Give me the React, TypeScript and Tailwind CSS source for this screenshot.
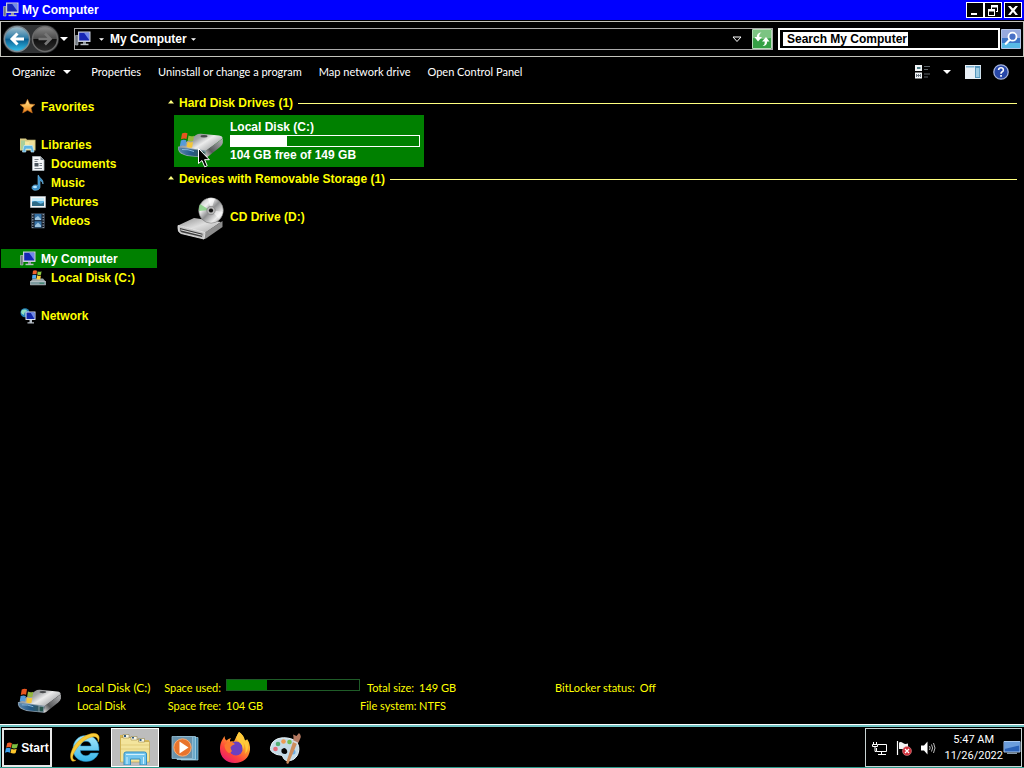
import React from "react";

type IconProps = { className?: string };

function ComputerIcon({ className = "size-4" }: IconProps) {
  return (
    <svg viewBox="0 0 16 16" className={className} aria-hidden="true">
      <path d="M.5 4.500h2.500v9.500h-2.500z" fill="#70787f" stroke="#c3c8cc" strokeWidth=".6" />
      <path d="M3 .5h12.500v10.500H3z" fill="#c9cedb" />
      <path d="M4.200 1.700h10v7.800h-10z" fill="#1626b4" />
      <path d="M9 1.700h5.200v7.300z" fill="#7089ea" />
      <path d="M8 11h3v2H8z" fill="#8f969e" />
      <path d="M5.500 12.700h8v1.500h-8z" fill="#bcc1c7" />
    </svg>
  );
}

function WinFlag({ className = "size-4" }: IconProps) {
  return (
    <svg viewBox="0 0 16 16" className={className} aria-hidden="true">
      <path d="M2.500 2.500C4.500 1.300 6 1.500 7.900 2.600L6.800 7.600C5 6.600 3.400 6.600 1.300 7.600Z" fill="#ee5a24" />
      <path d="M8.600 3C10.600 4.200 12.500 4 15 2.800L13.700 7.800C11.500 8.900 9.500 8.800 7.500 7.800Z" fill="#7fc241" />
      <path d="M1.100 8.400C3 7.500 4.700 7.500 6.600 8.500L5.500 13.300C3.700 12.300 2 12.400 0 13.400Z" fill="#3aa0ec" />
      <path d="M7.300 8.800C9.300 9.900 11.200 9.800 13.400 8.800L12.100 13.700C10 14.700 8.200 14.500 6.200 13.500Z" fill="#fcc62c" />
    </svg>
  );
}

function DriveIcon({ className = "h-8 w-12" }: IconProps) {
  return (
    <svg viewBox="0 0 48 32" className={className} aria-hidden="true">
      <defs>
        <linearGradient id="driveTop" x1="0" x2="1" y1="0" y2=".6">
          <stop offset="0" stopColor="#77797b" />
          <stop offset=".45" stopColor="#a4a6a8" />
          <stop offset=".65" stopColor="#ececec" />
          <stop offset="1" stopColor="#a0a2a4" />
        </linearGradient>
        <linearGradient id="driveSide" x1="0" x2="1" y1="1" y2="0">
          <stop offset="0" stopColor="#e6e6e6" />
          <stop offset=".35" stopColor="#58595b" />
          <stop offset="1" stopColor="#b5b6b8" />
        </linearGradient>
        <linearGradient id="driveFront" x1="0" x2="1" y1="0" y2="0">
          <stop offset="0" stopColor="#5c87ae" />
          <stop offset=".6" stopColor="#23598a" />
          <stop offset="1" stopColor="#345a62" />
        </linearGradient>
      </defs>
      <path d="M2 18.500L20 6Q22 4.600 25 4.800L43 6.500Q47 7 46.500 9.500L30 22Z" fill="url(#driveTop)" />
      <path d="M30 21.500L46.800 9.500V14Q46.500 16 44 18L31.500 28Q30 29 28.500 28.700Z" fill="url(#driveSide)" />
      <path d="M2 17.500L30 21.500L29 28.800L11 27Q3 25 2 20.500Z" fill="#8a9dac" />
      <path d="M2.800 18.500L23.500 21.500V27.500L12 26.200Q4.500 24.500 2.800 20.500Z" fill="url(#driveFront)" />
      <path d="M24.500 22.200L28.700 22.800L28 27.500L24.500 27.200Z" fill="#27554d" />
      <path d="M6 20.500Q12 20 18 22.500" fill="none" stroke="#8fc0e4" strokeWidth=".9" />
      <ellipse cx="28" cy="7.200" rx="3.500" ry="1.200" fill="#494b4d" />
      <path d="M6 4.500Q9 3 11.500 4.300L10.500 10Q8 9 5 10.300Z" fill="#e8561f" />
      <path d="M12.500 6.500Q15 8 18 6.800L17.200 12Q14.500 13 11.700 11.600Z" fill="#94b83f" />
      <path d="M4.800 11.400Q7.700 10.200 10.300 11.300L9.400 17Q6.700 15.900 3.800 17.200Z" fill="#559bdb" />
      <path d="M11.500 12.700Q14.300 14 17 13L16.200 18.400Q13.500 19.300 10.700 18Z" fill="#f4c63b" />
    </svg>
  );
}

function CdDriveIcon({ className = "h-11 w-12" }: IconProps) {
  return (
    <svg viewBox="0 0 48 44" className={className} aria-hidden="true">
      <defs>
        <linearGradient id="discShine" x1="0" x2="1" y1="0" y2="1">
          <stop offset="0" stopColor="#a9aba9" />
          <stop offset=".3" stopColor="#f0f0f0" />
          <stop offset=".5" stopColor="#8f9091" />
          <stop offset=".75" stopColor="#ebebeb" />
          <stop offset="1" stopColor="#999" />
        </linearGradient>
        <linearGradient id="cdBody" x1="0" x2="1" y1="0" y2="1">
          <stop offset="0" stopColor="#8b8b8b" />
          <stop offset=".5" stopColor="#dedede" />
          <stop offset="1" stopColor="#a4a4a4" />
        </linearGradient>
      </defs>
      <path d="M2 28.500L18 21L45 25L29 36Z" fill="url(#cdBody)" />
      <path d="M29 35.500L46.500 24V30L30 41.500Q28 42.500 26.500 42Z" fill="#8c8c8c" />
      <path d="M2 28.500L29 35.500L28 42L5 36.500Q1.600 35 2 31Z" fill="#c4c4c4" stroke="#eaeaea" strokeWidth=".8" />
      <path d="M4 31L26.500 36.700L26 40L5.500 35.200Q4 34.300 4 33Z" fill="#3b3b3b" />
      <path d="M4.500 32.800L26 38.200" stroke="#dadada" strokeWidth="1" />
      <ellipse cx="35" cy="13.500" rx="12.300" ry="12.700" fill="url(#discShine)" stroke="#777" strokeWidth=".6" />
      <path d="M33.500 13L24 7Q22.500 10 23 14Z" fill="#7fce7c" opacity=".8" />
      <path d="M35 13L32 1.200Q36 .5 39 1.500Z" fill="#fff" opacity=".7" />
      <path d="M35 13L47 15Q46 19 43 22Z" fill="#fff" opacity=".5" />
      <circle cx="35" cy="13.500" r="4.200" fill="#b5b5b5" stroke="#777" strokeWidth=".6" />
      <circle cx="35" cy="13.500" r="2.100" fill="#111" />
    </svg>
  );
}

function SmallDriveIcon() {
  return (
    <svg viewBox="0 0 16 16" className="size-4" aria-hidden="true">
      <path d="M3 8.500L13 8.500L16 12H0Z" fill="#9aa6aa" />
      <path d="M.3 11.500h15.400v3.300H.3z" fill="#7d9a9f" stroke="#c3ccd0" strokeWidth=".7" />
      <path d="M9.500 12.700h4.500v1H9.500z" fill="#2c7f62" />
      <path d="M3 .8Q5-.2 7 .8L6.500 4.300Q4.500 3.500 2.500 4.300Z" fill="#f0612b" />
      <path d="M7.700 1.300Q9.500 2.300 11.500 1.300L11 4.800Q9 5.500 7.200 4.600Z" fill="#8acb43" />
      <path d="M2.400 5Q4.300 4.300 6.300 5.100L5.800 8.800Q4 8 2 8.800Z" fill="#53adf0" />
      <path d="M7 5.300Q9 6.300 10.900 5.500L10.300 9.300Q8.500 10 6.500 9Z" fill="#ffd340" />
    </svg>
  );
}

function StarIcon() {
  return (
    <svg viewBox="0 0 16 16" className="size-4" aria-hidden="true">
      <defs>
        <linearGradient id="starFill" x1="0" x2="0" y1="0" y2="1">
          <stop offset="0" stopColor="#ffe9a8" />
          <stop offset=".5" stopColor="#f8b850" />
          <stop offset="1" stopColor="#e87a18" />
        </linearGradient>
      </defs>
      <path d="M7.500.3L9.700 5L15 5.500L11 8.900L12.300 14L7.500 11.300L2.700 14L4 8.900L0 5.500L5.300 5Z" fill="url(#starFill)" stroke="#b9641a" strokeWidth=".6" />
    </svg>
  );
}

function LibrariesIcon() {
  return (
    <svg viewBox="0 0 16 16" className="size-4" aria-hidden="true">
      <path d="M0 1.500h6l1 1.300h8.500V13.500H0z" fill="#d9cb83" />
      <path d="M1 3.500h4v9H1z" fill="#a9cf9b" />
      <path d="M5 4.500h4v8H5z" fill="#f6e8a4" />
      <path d="M9 4h5.500v8.500H9z" fill="#efe09c" />
      <path d="M2.500 15L4 8.500h8.500L14 15h-3v-3H5.800v3z" fill="#5fb5e3" stroke="#c9ecfb" strokeWidth=".7" />
    </svg>
  );
}

function DocumentIcon() {
  return (
    <svg viewBox="0 0 16 16" className="size-4" aria-hidden="true">
      <path d="M2.500.5h8L14 4v10.500H2.500z" fill="#f4f6f8" stroke="#aeb7bd" strokeWidth=".8" />
      <path d="M10.500.5V4H14z" fill="#7d868e" />
      <path d="M4.500 3.500h4M4.500 5.500h3M9.500 7.500H12M9.500 9.500H12M4.500 12.500H12" stroke="#7a828a" />
      <path d="M4.500 7h4v3.500h-4z" fill="#49535c" />
    </svg>
  );
}

function MusicIcon() {
  return (
    <svg viewBox="0 0 16 16" className="size-4" aria-hidden="true">
      <path d="M8.500.3C9.500 3.300 13.800 4.500 13 9C12.500 7 11.500 6 10 5.500V12C10 16 2 16.500 2 12.700C2 10 5.500 9.300 8 10.500V.3Z" fill="#3389c4" stroke="#80c6ef" strokeWidth=".6" />
      <ellipse cx="5" cy="12" rx="2" ry="1.300" fill="#b6e6ff" />
    </svg>
  );
}

function PictureIcon() {
  return (
    <svg viewBox="0 0 16 16" className="size-4" aria-hidden="true">
      <path d="M.5 2.500h15v11H.5z" fill="#f3f5f7" stroke="#b8c1c8" strokeWidth=".7" />
      <path d="M2 4h12v8H2z" fill="#62b6e6" />
      <path d="M2 4h12v3H2z" fill="#c6ecfb" />
      <path d="M2 8.500Q5 6 8 8.500T14 8v4H2z" fill="#2f6a86" />
    </svg>
  );
}

function VideoIcon() {
  return (
    <svg viewBox="0 0 16 16" className="size-4" aria-hidden="true">
      <path d="M1.500.5h13v14.500h-13z" fill="#161d28" stroke="#3b4653" strokeWidth=".8" />
      <path d="M4.500 1h7v6.300h-7zM4.500 8.300h7v6.200h-7z" fill="#3874a8" />
      <path d="M5 5L8 3L11 6V7H5zM5 12.500L8 9.500L11 12.500V14H5z" fill="#9cc3df" />
      <path d="M2.800 1v14M13.200 1v14" stroke="#a7b2be" strokeWidth="1.200" strokeDasharray="1.300 1.300" />
    </svg>
  );
}

function NetworkIcon() {
  return (
    <svg viewBox="0 0 16 16" className="size-4" aria-hidden="true">
      <circle cx="5" cy="4.800" r="4.500" fill="#2584b8" />
      <path d="M2 2Q6 .8 7 2.800Q4 4 4 7Q1 6 1 4Z" fill="#92e0bf" />
      <path d="M5.500 3.500h10v8.500h-10z" fill="#dde3ef" />
      <path d="M6.500 4.500h8V11h-8z" fill="#1126a8" />
      <path d="M10.500 4.500h4V11z" fill="#6f8ae8" />
      <path d="M9.500 12h2.500v2.300H9.500zM7.500 14.200h6.500v1.200H7.500z" fill="#b8c0c8" />
    </svg>
  );
}

function DownArrow({ className = "h-1 w-2" }: IconProps) {
  return (
    <svg viewBox="0 0 8 4" className={className} aria-hidden="true">
      <path d="M0 0h8L4 4z" fill="#fff" />
    </svg>
  );
}

function NavArrow({ forward = false }: { forward?: boolean }) {
  return (
    <svg viewBox="0 0 28 28" className="size-7" aria-hidden="true">
      <defs>
        <linearGradient id="backFill" x1="0" x2="0" y1="0" y2="1">
          <stop offset="0" stopColor="#a5c0cd" />
          <stop offset=".45" stopColor="#2f7da8" />
          <stop offset=".52" stopColor="#0a5f92" />
          <stop offset="1" stopColor="#35c3ee" />
        </linearGradient>
        <linearGradient id="forwardFill" x1="0" x2="0" y1="0" y2="1">
          <stop offset="0" stopColor="#8a8a8a" />
          <stop offset=".48" stopColor="#4c4c4c" />
          <stop offset=".52" stopColor="#101010" />
          <stop offset="1" stopColor="#2e2e2e" />
        </linearGradient>
      </defs>
      <circle cx="14" cy="14" r="12.500" fill={forward ? "url(#forwardFill)" : "url(#backFill)"} stroke={forward ? "#6a6a6a" : "#7d8a92"} strokeWidth="1.500" />
      {forward ? (
        <path d="M7.500 14h12M14 8.500L19.500 14L14 19.500" fill="none" stroke="#777" strokeWidth="2.600" />
      ) : (
        <path d="M21 14H9.500M14.500 8.500L9 14L14.500 19.500" fill="none" stroke="#fff" strokeWidth="3" />
      )}
    </svg>
  );
}

function RefreshIcon() {
  return (
    <svg viewBox="0 0 20 20" className="size-5" aria-hidden="true">
      <path d="M.5.5h19v19H.5z" fill="#35a045" stroke="#b7dcb9" />
      <path d="M1 1h18v8Q10 11 1 9z" fill="#7cc482" />
      <path d="M9.500 3.500Q7 4.500 7.300 8H10L6 12.500L2.500 8H4.800Q5 3.500 9.500 3.500Z" fill="#fff" />
      <path d="M10.500 17Q13 16 12.700 12.500H10L14 8L17.500 12.500H15.200Q15 17 10.500 17Z" fill="#fff" />
    </svg>
  );
}

function SearchIcon() {
  return (
    <svg viewBox="0 0 20 20" className="size-5" aria-hidden="true">
      <path d="M.5.5h19v19H.5z" fill="#3c74c6" stroke="#b5c6e6" />
      <path d="M1 1h18v8H1z" fill="#97a9de" />
      <path d="M1 14h18v5H1z" fill="#58b9e6" />
      <circle cx="11.500" cy="7.700" r="4" fill="#4a70c6" stroke="#fff" strokeWidth="1.800" />
      <path d="M8.500 11L4.800 14.800" stroke="#fff" strokeWidth="2.300" strokeLinecap="round" />
    </svg>
  );
}

function IeIcon() {
  return (
    <svg viewBox="0 0 32 32" className="size-8" aria-hidden="true">
      <defs>
        <linearGradient id="ieBlue" x1="0" x2="0" y1="0" y2="1">
          <stop offset="0" stopColor="#a8e9fb" />
          <stop offset="1" stopColor="#35b4e8" />
        </linearGradient>
      </defs>
      <path d="M17 3.500C9 3.500 4 9.500 4 17C4 24.500 9.500 29.500 17 29.500C23 29.500 27.500 26.500 29.500 21H21.500C20.500 22.800 19 23.700 16.800 23.700C13.500 23.700 11.500 21.800 11.300 18.500H30C30.500 9.500 25.500 3.500 17 3.500ZM11.500 14C12 11 14 9.300 17 9.300C20 9.300 21.800 11 22.200 14Z" fill="url(#ieBlue)" stroke="#1d8fc8" strokeWidth=".5" />
      <path d="M3 29C-1.500 23.500 4.500 11.500 14.500 5C21.500.5 28.500 0 30 4.500C30.500 6.500 29.800 8.500 29 10C29.500 6 27 3.500 21 5.500C13.500 8 6 17.500 4 23.500C3.300 26.300 4 28 7 28.300Q5 29.800 3 29Z" fill="#f8cc38" stroke="#cf9210" strokeWidth=".4" />
    </svg>
  );
}

function ExplorerIcon() {
  return (
    <svg viewBox="0 0 32 34" className="h-[34px] w-8" aria-hidden="true">
      <path d="M1 4h8l1 3h7l1 2h12v22H1z" fill="#d2b65a" />
      <path d="M1.500 6.500h10.500l1 2h7l1 2h9.500V31h-29z" fill="#f3e49c" stroke="#bfa03d" strokeWidth=".6" />
      <path d="M4 3.500h6v3.500H4zM12 5.500h6V9h-6zM19.500 7.500h6V11h-6z" fill="#f8f6e5" stroke="#887634" strokeWidth=".5" />
      <path d="M5 4h2v2H5zM13 6h2v1.500h-2zM20.500 8h2v2h-2z" fill="#2e5a80" />
      <path d="M2 14h28M2 18h28" stroke="#e2cd7a" />
      <path d="M5 34V23q0-2 2-2h18.500q2 0 2 2v11h-6.500v-6H11.500v6z" fill="#73c5ed" stroke="#328dc0" />
      <path d="M7 23.500h18.500M8 26v7M24.500 26v7" stroke="#d1f0fc" />
    </svg>
  );
}

function MediaIcon() {
  return (
    <svg viewBox="0 0 28 28" className="size-7" aria-hidden="true">
      <path d="M10 3.500h17V26H10z" fill="#4189b0" stroke="#a8d6ea" strokeWidth=".7" />
      <path d="M6 2.500h18.500v23H6z" fill="#6caac9" stroke="#b4dcec" strokeWidth=".7" />
      <path d="M1 2.500h20.500v22H1z" fill="#6a93ab" stroke="#94bfd5" strokeWidth=".8" />
      <circle cx="11.500" cy="13.500" r="8.700" fill="#e9742c" stroke="#f6b07b" strokeWidth="1" />
      <path d="M8.500 7.500L17.500 13.500L8.500 19.500Z" fill="#fff" />
    </svg>
  );
}

function FirefoxIcon() {
  return (
    <svg viewBox="0 0 32 32" className="size-8" aria-hidden="true">
      <defs>
        <linearGradient id="foxFire" x1=".9" x2=".2" y1="0" y2="1">
          <stop offset="0" stopColor="#fff04f" />
          <stop offset=".4" stopColor="#ff9a2b" />
          <stop offset=".7" stopColor="#ff453b" />
          <stop offset="1" stopColor="#e51673" />
        </linearGradient>
      </defs>
      <path d="M20 0C24 3 25 6 25.500 8Q27.500 9 28 7Q31.500 12 31 18C30 26 24 31 16 31C7 31 1 25 1 17C1 11 3 8 5.500 4Q5.500 7 7.500 8.500Q9 6.500 12 6Q10.500 8 11 9.500Q13 9 15 9.500Q17 5 20 0Z" fill="url(#foxFire)" />
      <ellipse cx="17" cy="16.500" rx="6.800" ry="7" fill="#6b40c0" />
      <path d="M5.500 13Q9 9 12.500 10.500Q16 10.500 15.500 12.500Q12.500 13 11.500 15.500Q12 18 13 19Q11 22 9 20.500Q5.500 18 5.500 13Z" fill="#fb7a2e" />
      <path d="M20 0Q16 5 18.500 8.500Q24 12 23.800 18Q26 14 24 10Q28 15 26 22Q31 17 28 9Q27 12 26 9Q25 3 20 0Z" fill="#ffcb39" />
    </svg>
  );
}

function PaintIcon() {
  return (
    <svg viewBox="0 0 32 32" className="size-8" aria-hidden="true">
      <path d="M2 14C4 5 17 4 25 8C32 12 31 23 25 27C20 30 15 29 14 25C13 22 9 24 5 21Q0 19 2 14Z" fill="#c3dbe7" stroke="#eef8fc" />
      <path d="M12.500 17.500q3-3 5 0t-1 4.500q-5 0-4-4.500z" fill="#050505" />
      <circle cx="6.500" cy="17" r="2.300" fill="#e46a77" />
      <circle cx="9" cy="12" r="2.300" fill="#55ae74" />
      <circle cx="14.500" cy="9.500" r="2.300" fill="#ef9a54" />
      <circle cx="20.500" cy="10" r="2.300" fill="#70c053" />
      <circle cx="24" cy="20" r="2.500" fill="#73aee0" />
      <path d="M24 10L28 11.500L19.500 31.500Q17 32.500 17.500 29.500Z" fill="#cd8d5c" />
      <path d="M24 9.500Q25 6 24 2.500L27.500 4L30 1Q33 4 31 7Q30 10 28.500 11.500Z" fill="#b57a62" />
      <path d="M24 9L29 11.500" stroke="#d8d8d8" strokeWidth="1.500" />
    </svg>
  );
}

function TrayNetworkIcon() {
  return (
    <svg viewBox="0 0 16 16" className="size-4" aria-hidden="true" fill="none" stroke="#fff">
      <path d="M6 4.500h8.500v7h-10V8M9.500 12v2M6 14.500h8" />
      <path d="M1.500 2v2M4.500 2v2M.5 4.500h5v2h-5zM3 7v4.500h1.500" />
    </svg>
  );
}

function TrayFlagIcon() {
  return (
    <svg viewBox="0 0 16 16" className="size-4" aria-hidden="true">
      <path d="M1.500 1v14" stroke="#fff" strokeWidth="1.200" />
      <path d="M3 2.500Q5 1.500 7 3T12 3.500v5.500H3z" fill="#f2f2f2" />
      <circle cx="11" cy="11" r="4.500" fill="#cf2f3a" stroke="#e9a0a4" strokeWidth=".5" />
      <path d="M9 9l4 4m0-4l-4 4" stroke="#fff" strokeWidth="1.300" />
    </svg>
  );
}

function SpeakerIcon() {
  return (
    <svg viewBox="0 0 16 16" className="size-4" aria-hidden="true">
      <path d="M1 5.500h3l3.500-4v13l-3.500-4H1z" fill="#fff" />
      <path d="M9.500 6q1.300 2 0 4M11.500 4.500q2.200 3.500 0 7M13.500 3q3 5 0 10" fill="none" stroke="#d0d0d0" strokeWidth=".9" />
    </svg>
  );
}

function DesktopIcon() {
  return (
    <svg viewBox="0 0 18 16" className="h-4 w-[18px]" aria-hidden="true">
      <path d="M1 1.500h16v10.500H1z" fill="#2a62b8" stroke="#a9c7ec" />
      <path d="M1.500 2h15v3.500L1.500 9z" fill="#6b9ddc" />
      <path d="M4 12.500h10v1.500H4z" fill="#8798a8" />
    </svg>
  );
}

function ViewsIcon() {
  return (
    <svg viewBox="0 0 16 16" className="size-4" aria-hidden="true">
      <path d="M0 1h7v6H0zM0 8.500h7v6H0z" fill="#f2f5f7" />
      <path d="M2 3h3.500v2H2z" fill="#4f7e88" />
      <path d="M1.500 10v3M3.500 10v3M5.500 10v3M1.500 11.500h4" stroke="#6d7780" />
      <path d="M9 2.500h6M9 5.500h4M9 10h6M9 13h4" stroke="#5c6369" />
    </svg>
  );
}

function PreviewPaneIcon() {
  return (
    <svg viewBox="0 0 16 14" className="h-3.5 w-4" aria-hidden="true">
      <path d="M0 0h16v14H0z" fill="#e9f0f6" />
      <path d="M1 1h8.500v1.500H1z" fill="#7fb3d1" />
      <path d="M10 1h5.200v12H10z" fill="#5596bb" />
      <path d="M11 3h3.300v9H11z" fill="#9fcde4" />
    </svg>
  );
}

function HelpIcon() {
  return (
    <svg viewBox="0 0 16 16" className="size-4" aria-hidden="true">
      <circle cx="8" cy="8" r="7.200" fill="#2747a8" stroke="#a5b3dc" strokeWidth="1.300" />
      <path d="M5.600 6Q5.700 3.800 8 3.800T10.400 6Q10.400 7.200 8.900 8Q8 8.600 8 9.800" fill="none" stroke="#fff" strokeWidth="1.600" />
      <path d="M7.200 11h1.700v1.700H7.200z" fill="#fff" />
    </svg>
  );
}

function CursorIcon() {
  return (
    <svg viewBox="0 0 12 20" className="pointer-events-none absolute top-[33px] left-6 h-5 w-3" aria-hidden="true">
      <path d="M.5.5V15.500L4 12.500L6.700 18.800L9.200 17.700L6.600 11.700H11.300Z" fill="#000" stroke="#fff" />
    </svg>
  );
}

const windowButtons = [
  { label: "Minimize", d: "M3 10h6v2H3z", gap: "" },
  { label: "Restore", d: "M5 2h7v7h-2v-1h1V4.500H6V6H5zM2 6h7v7H2zM3 8.500V12h5V8.500z", gap: "" },
  { label: "Close", d: "M2 3h2.500L7 5.500L9.500 3H12L8.500 7.500L12 12H9.500L7 9L4.500 12H2L5.500 7.500z", gap: "ml-0.5" },
];

const commands = ["Properties", "Uninstall or change a program", "Map network drive", "Open Control Panel"];

type Place = { label: string; icon: React.ReactNode; child?: boolean; selected?: boolean };

const places: Place[][] = [
  [{ label: "Favorites", icon: <StarIcon /> }],
  [
    { label: "Libraries", icon: <LibrariesIcon /> },
    { label: "Documents", icon: <DocumentIcon />, child: true },
    { label: "Music", icon: <MusicIcon />, child: true },
    { label: "Pictures", icon: <PictureIcon />, child: true },
    { label: "Videos", icon: <VideoIcon />, child: true },
  ],
  [
    { label: "My Computer", icon: <ComputerIcon />, selected: true },
    { label: "Local Disk (C:)", icon: <SmallDriveIcon />, child: true },
  ],
  [{ label: "Network", icon: <NetworkIcon /> }],
];

const apps = [
  { label: "Internet Explorer", icon: <IeIcon /> },
  { label: "Windows Explorer", icon: <ExplorerIcon />, active: true },
  { label: "Media Player", icon: <MediaIcon /> },
  { label: "Firefox", icon: <FirefoxIcon /> },
  { label: "Paint", icon: <PaintIcon /> },
];

function GroupHeader({ title }: { title: string }) {
  return (
    <h2 className="flex h-[18px] items-center gap-[5px] font-bold">
      <svg viewBox="0 0 6 4" className="mb-0.5 h-1 w-1.5" aria-hidden="true">
        <path d="M0 3.500L3 0L6 3.500z" fill="#ffff80" />
      </svg>
      <span className="whitespace-nowrap">{title}</span>
      <span className="h-px grow bg-[#ffff80]" />
    </h2>
  );
}

export default function App() {
  return (
    <div className="flex h-screen flex-col overflow-hidden bg-black font-['Liberation_Sans',Arial,sans-serif] text-[12px] leading-4 text-white">
      <header className="flex h-5 shrink-0 items-center bg-[#0000ff] pr-0.5 pl-[3px]">
        <ComputerIcon />
        <h1 className="ml-[3px] grow font-bold">My Computer</h1>
        {windowButtons.map((b) => (
          <button key={b.label} aria-label={b.label} className={`flex h-4 w-[18px] items-center justify-center border border-white bg-black ${b.gap}`}>
            <svg viewBox="0 0 14 14" className="size-3.5" aria-hidden="true">
              <path d={b.d} fill="#fff" fillRule="evenodd" />
            </svg>
          </button>
        ))}
      </header>

      <nav className="mt-px flex h-9 shrink-0 items-center border border-[#c4c4bc] px-0.5">
        <div className="flex items-center rounded-full bg-[#303234]">
          <button aria-label="Back"><NavArrow /></button>
          <button aria-label="Forward"><NavArrow forward /></button>
        </div>
        <button aria-label="Recent pages" className="ml-px"><DownArrow /></button>
        <div className="ml-1.5 flex h-[22px] grow items-center border border-[#aaa] font-bold">
          <ComputerIcon />
          <DownArrow className="ml-2 h-[3px] w-[5px]" />
          <button className="ml-1.5 flex items-center gap-1 font-bold">
            My Computer
            <DownArrow className="h-[3px] w-[5px]" />
          </button>
          <button aria-label="Previous locations" className="mr-2.5 ml-auto">
            <svg viewBox="0 0 10 7" className="h-[7px] w-2.5" aria-hidden="true">
              <path d="M1 1h8L5 5.500z" fill="none" stroke="#fff" />
            </svg>
          </button>
          <button aria-label="Refresh"><RefreshIcon /></button>
        </div>
        <form className="ml-[5px] flex h-[22px] items-center" onSubmit={(e) => e.preventDefault()}>
          <div className="flex h-full w-[222px] items-center border-2 border-white px-[3px]">
            <input
              aria-label="Search"
              defaultValue="Search My Computer"
              className="h-3.5 w-[125px] bg-white pl-1 font-bold text-black outline-none"
            />
          </div>
          <button aria-label="Start search" className="ml-px"><SearchIcon /></button>
        </form>
      </nav>

      <div className="flex h-[30px] shrink-0 items-center px-3 font-['Lato',sans-serif] text-[11px]">
        <button className="flex items-center gap-2">
          Organize
          <DownArrow />
        </button>
        <div className="ml-5 flex gap-[17px]">
          {commands.map((c) => (
            <button key={c} className="whitespace-nowrap">{c}</button>
          ))}
        </div>
        <div className="ml-auto flex items-center pr-[3px]">
          <button aria-label="Change view"><ViewsIcon /></button>
          <button aria-label="More views" className="ml-3"><DownArrow /></button>
          <button aria-label="Preview pane" className="ml-3.5"><PreviewPaneIcon /></button>
          <button aria-label="Help" className="ml-3"><HelpIcon /></button>
        </div>
      </div>

      <div className="flex min-h-0 grow text-[#ffff00]">
        <aside className="flex w-[157px] shrink-0 flex-col gap-[19px] pt-2.5 pl-px font-bold">
          {places.map((group) => (
            <ul key={group[0].label}>
              {group.map((p) => (
                <li key={p.label}>
                  <a
                    href="#"
                    className={`flex h-[19px] items-center gap-[5px] whitespace-nowrap ${p.child ? "pl-[29px]" : "pl-[19px]"} ${p.selected ? "bg-[#008000] text-white" : ""}`}
                  >
                    {p.icon}
                    {p.label}
                  </a>
                </li>
              ))}
            </ul>
          ))}
        </aside>

        <main className="min-w-0 grow pt-[7px] pr-[7px] pl-[11px]">
          <section>
            <GroupHeader title="Hard Disk Drives (1)" />
            <div className="relative mt-[3px] ml-1.5 flex h-[52px] w-[250px] items-center gap-1.5 bg-[#008000] pr-1 pl-0.5 font-bold text-white">
              <DriveIcon className="mt-2 h-8 w-12 shrink-0" />
              <div className="grow">
                <div className="h-4">Local Disk (C:)</div>
                <div className="h-3 border border-white">
                  <div className="h-full w-[30%] bg-white" />
                </div>
                <div className="h-4">104 GB free of 149 GB</div>
              </div>
              <CursorIcon />
            </div>
          </section>
          <section className="mt-[3px]">
            <GroupHeader title="Devices with Removable Storage (1)" />
            <div className="mt-[3px] ml-1.5 flex h-[52px] w-[250px] items-center gap-1.5 pl-0.5 font-bold">
              <CdDriveIcon className="mt-1 h-11 w-12 shrink-0" />
              CD Drive (D:)
            </div>
          </section>
        </main>
      </div>

      <footer className="flex h-[45px] shrink-0 items-start pl-4 font-['Lato',sans-serif] text-[11px] leading-[18px] whitespace-nowrap text-[#ffff00]">
        <DriveIcon className="mt-1.5 h-[31px] w-[46px] shrink-0" />
        <div className="ml-[15px] w-20">
          <div className="text-[12px]">Local Disk (C:)</div>
          <div>Local Disk</div>
        </div>
        <dl className="grid grid-cols-[64px_134px] gap-x-[5px]">
          <dt className="text-right">Space used:</dt>
          <dd>
            <div className="h-3 border border-[#1f5c28]">
              <div className="h-full w-[30%] bg-[#008000]" />
            </div>
          </dd>
          <dt className="text-right">Space free:</dt>
          <dd>104 GB</dd>
        </dl>
        <dl className="grid grid-cols-[54px_136px] gap-x-[5px]">
          <dt className="text-right">Total size:</dt>
          <dd>149 GB</dd>
          <dt className="text-right">File system:</dt>
          <dd>NTFS</dd>
        </dl>
        <dl className="flex gap-[5px]">
          <dt>BitLocker status:</dt>
          <dd>Off</dd>
        </dl>
      </footer>

      <div className="flex h-11 shrink-0 items-stretch border-t border-b border-t-white border-b-[#2a9a8c] bg-black">
        <div className="flex grow items-stretch border-t-2 border-l border-[#70c4c4] pt-px pr-0.5 pl-px">
          <button className="flex w-[50px] items-center justify-center gap-0.5 border-2 border-[#e8e8e8] font-bold">
            <WinFlag className="size-3.5 shrink-0" />
            Start
          </button>
          <div className="ml-[9px] flex items-stretch gap-0.5">
            {apps.map((a) => (
              <button
                key={a.label}
                aria-label={a.label}
                className={`flex w-12 items-center justify-center border ${a.active ? "border-white bg-[#bdbdbd]" : "border-transparent"}`}
              >
                {a.icon}
              </button>
            ))}
          </div>
          <div className="ml-auto flex items-center border border-[#c8d4d4] pl-1.5">
            <div className="flex items-center gap-2">
              <TrayNetworkIcon />
              <TrayFlagIcon />
              <SpeakerIcon />
            </div>
            <div className="ml-2 text-center font-['Roboto',sans-serif] text-[11px] leading-4">
              <div>5:47 AM</div>
              <div>11/26/2022</div>
            </div>
            <button aria-label="Show desktop"><DesktopIcon /></button>
          </div>
        </div>
      </div>
    </div>
  );
}
